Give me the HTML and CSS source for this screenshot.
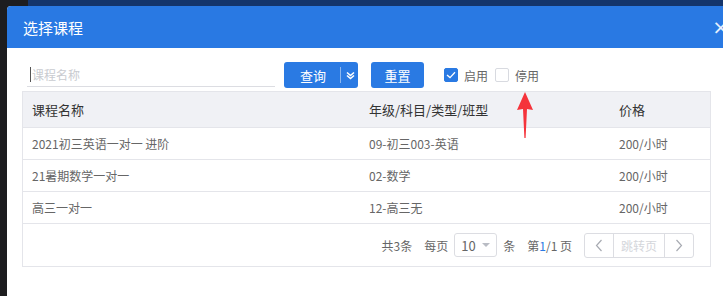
FILE: index.html
```html
<!DOCTYPE html>
<html lang="zh">
<head>
  <meta charset="UTF-8" />
  <title>选择课程</title>
  <link rel="stylesheet" href="styles.css">
</head>
<body>
  <div class="topband"></div>
  <div class="dialog">
    <div class="dialog-head">
      <span class="dialog-title">选择课程</span>
      <span class="dialog-close">×</span>
    </div>
    <div class="dialog-body">
      <div class="toolbar">
        <div class="search-input"><span class="caret"></span>课程名称</div>
        <div class="btn btn-query">
          <span class="btn-text">查询</span>
          <span class="btn-split"></span>
          <svg class="btn-more" width="9" height="9" viewBox="0 0 9 9">
            <path d="M1 1.5 L4.5 4.5 L8 1.5 M1 4.5 L4.5 7.5 L8 4.5" fill="none" stroke="#fff" stroke-width="1.6"/>
          </svg>
        </div>
        <div class="btn btn-reset">重置</div>
        <label class="check">
          <span class="box checked">
            <svg width="10" height="8" viewBox="0 0 10 8"><path d="M1 4 L4 6.6 L9 1.2" fill="none" stroke="#fff" stroke-width="1.3"/></svg>
          </span>启用
        </label>
        <label class="check">
          <span class="box"></span>停用
        </label>
      </div>

      <div class="grid">
        <div class="row head">
          <div class="cell c1">课程名称</div>
          <div class="cell c2">年级/科目/类型/班型</div>
          <div class="cell c3">价格</div>
        </div>
        <div class="row">
          <div class="cell c1">2021初三英语一对一 进阶</div>
          <div class="cell c2">09-初三003-英语</div>
          <div class="cell c3">200/小时</div>
        </div>
        <div class="row">
          <div class="cell c1">21暑期数学一对一</div>
          <div class="cell c2">02-数学</div>
          <div class="cell c3">200/小时</div>
        </div>
        <div class="row">
          <div class="cell c1">高三一对一</div>
          <div class="cell c2">12-高三无</div>
          <div class="cell c3">200/小时</div>
        </div>
        <div class="pager">
          <span>共3条</span>
          <span class="pager-gap">每页</span>
          <div class="size-select">10 <span class="tri"></span></div>
          <span>条</span>
          <span class="pager-gap">第<em>1</em>/1 页</span>
          <div class="pager-btns">
            <span class="pbtn arrow">
              <svg width="8" height="13" viewBox="0 0 8 13"><path d="M6.5 1 L1.5 6.5 L6.5 12" fill="none" stroke="#a8abb2" stroke-width="1.2"/></svg>
            </span>
            <span class="pbtn jump">跳转页</span>
            <span class="pbtn arrow">
              <svg width="8" height="13" viewBox="0 0 8 13"><path d="M1.5 1 L6.5 6.5 L1.5 12" fill="none" stroke="#a8abb2" stroke-width="1.2"/></svg>
            </span>
          </div>
        </div>
      </div>
    </div>
  </div>

  <!-- 标注箭头 -->
  <svg class="mark-arrow" width="18" height="48" viewBox="0 0 18 48">
    <path d="M9 0 L17 18 L11 17 L9.6 46 L8.4 46 L7 17 L1 18 Z" fill="#f5333b"/>
  </svg>
</body>
</html>
```

FILE: styles.css
```css
body {
  margin: 0;
  background: #1d1d1f;
  font-family: "Noto Sans CJK SC", "Noto Sans", sans-serif;
  height: 296px;
  overflow: hidden;
  position: relative;
}
.topband {
  height: 6px;
  margin-left: 28px;
  background: #14356b;
}
.dialog {
  margin-left: 7px;
  background: #fff;
  border-radius: 4px 0 0 0;
  overflow: hidden;
  height: 290px;
}
.dialog-head {
  height: 42px;
  background: #2979e3;
  display: flex;
  align-items: center;
  justify-content: space-between;
  padding-left: 16px;
}
.dialog-title {
  color: #fff;
  font-size: 15px;
}
.dialog-close {
  color: #e8f0fc;
  font-size: 20px;
  margin-right: -6px;
  font-family: "DejaVu Sans", sans-serif;
}
.dialog-body {
  padding: 14px 12px 0 15px;
}
.toolbar {
  display: flex;
  align-items: center;
  height: 26px;
  margin-bottom: 3px;
  font-size: 13px;
}
.search-input {
  width: 248px;
  margin-left: 5px;
  height: 24px;
  border-bottom: 1px solid #dcdde2;
  color: #c9cbd0;
  display: flex;
  align-items: center;
  padding-left: 3px;
  box-sizing: border-box;
  font-size: 12px;
}
.caret {
  width: 1px;
  height: 15px;
  background: #555;
  margin-right: 1px;
}
.btn {
  height: 26px;
  background: #2a7ae3;
  color: #fff;
  border-radius: 3px;
  display: flex;
  align-items: center;
  font-size: 13px;
}
.btn-query {
  width: 74px;
  margin-left: 9px;
}
.btn-text {
  margin-left: 16px;
}
.btn-split {
  width: 1px;
  height: 16px;
  background: #8db7ee;
  margin-left: 14px;
}
.btn-more {
  margin-left: 5px;
}
.btn-reset {
  width: 53px;
  margin-left: 13px;
  justify-content: center;
}
.check {
  display: flex;
  align-items: center;
  color: #666;
  font-size: 12px;
}
.check:first-of-type {
  margin-left: 20px;
}
.check + .check {
  margin-left: 7px;
}
.box {
  width: 12px;
  height: 12px;
  border: 1px solid #d8dae0;
  border-radius: 2px;
  margin-right: 6px;
  display: flex;
  align-items: center;
  justify-content: center;
}
.box.checked {
  background: #2a7ae3;
  border-color: #2a7ae3;
}
.grid {
  border: 1px solid #e4e5ea;
  width: 689px;
  box-sizing: border-box;
}
.row {
  display: flex;
  height: 31px;
  align-items: center;
  border-top: 1px solid #e4e5ea;
  font-size: 12px;
  color: #666;
}
.row.head {
  border-top: none;
  height: 35px;
  background: #f0f1f5;
  color: #333;
  font-size: 13px;
}
.cell {
  padding-left: 9px;
  box-sizing: border-box;
}
.c1 { width: 337px; }
.c2 { width: 250px; }
.c3 { flex: 1; }
.pager {
  border-top: 1px solid #e4e5ea;
  height: 42px;
  display: flex;
  align-items: center;
  justify-content: flex-end;
  padding-right: 16px;
  font-size: 12px;
  color: #666;
}
.pager-gap {
  margin-left: 12px;
}
.pager em {
  font-style: normal;
  color: #2a7ae3;
}
.size-select {
  width: 43px;
  height: 24px;
  border: 1px solid #dcdde2;
  border-radius: 3px;
  box-sizing: border-box;
  margin: 0 6px 0 6px;
  display: flex;
  align-items: center;
  padding-left: 6px;
  gap: 6px;
  font-size: 13px;
}
.tri {
  width: 0;
  height: 0;
  border-left: 4px solid transparent;
  border-right: 4px solid transparent;
  border-top: 4px solid #b9bcc4;
}
.pager-btns {
  display: flex;
  margin-left: 12px;
  height: 25px;
  border: 1px solid #dcdde2;
  border-radius: 3px;
  box-sizing: border-box;
}
.pbtn {
  display: flex;
  align-items: center;
  justify-content: center;
}
.pbtn.arrow {
  width: 28px;
}
.pbtn.jump {
  width: 50px;
  border-left: 1px solid #dcdde2;
  border-right: 1px solid #dcdde2;
  color: #d4d6db;
  font-size: 12px;
}
.mark-arrow {
  position: absolute;
  left: 516px;
  top: 92px;
}
```
